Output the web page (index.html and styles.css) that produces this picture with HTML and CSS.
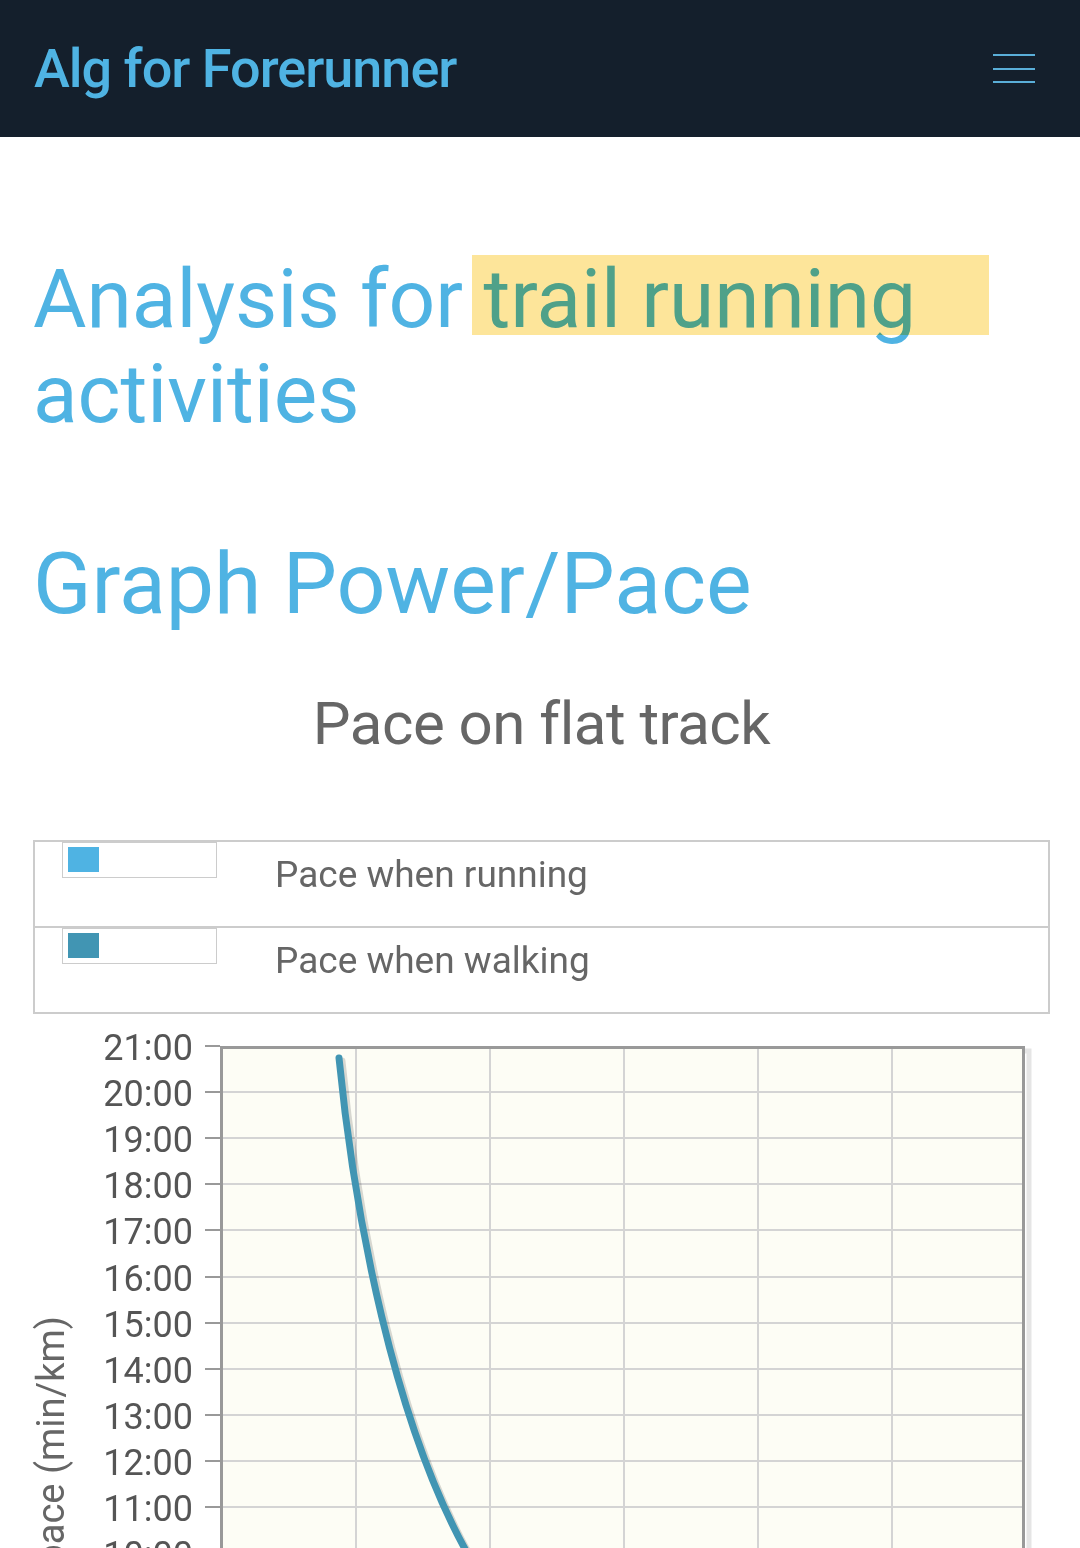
FILE: index.html
```html
<!DOCTYPE html>
<html lang="en">
  <head>
    <meta charset="UTF-8" />
    <meta name="viewport" content="width=device-width, initial-scale=1.0" />
    <title>Alg for Forerunner</title>
    <link rel="stylesheet" href="styles.css">
  </head>
  <body>
    <!-- Top bar -->
    <header class="navbar">
      <a class="brand" href="#">Alg for Forerunner</a>
      <button class="menu-toggle" aria-label="Menu">
        <span></span>
        <span></span>
        <span></span>
      </button>
    </header>

    <main class="content">
      <h1 class="page-title">Analysis for <mark class="marker">trail running</mark> activities</h1>

      <h2 class="section-title">Graph Power/Pace</h2>

      <div class="chart-title">Pace on flat track</div>

      <!-- Legend -->
      <div class="legend">
        <div class="legend-row">
          <span class="swatch"><span class="swatch-color running"></span></span>
          <span class="legend-label">Pace when running</span>
        </div>
        <div class="legend-row">
          <span class="swatch"><span class="swatch-color walking"></span></span>
          <span class="legend-label">Pace when walking</span>
        </div>
      </div>

      <!-- Chart -->
      <svg class="chart" width="1017" height="535" viewBox="0 0 1017 535">
        <!-- plot background + shadow -->
        <rect x="192" y="37" width="804" height="560" fill="none" stroke="rgba(0,0,0,0.1)" stroke-width="5" />
        <rect x="187" y="32" width="805" height="560" fill="#fdfdf5" />

        <!-- grid -->
        <g stroke="#d4d4d4" stroke-width="2">
          <line x1="323" y1="32" x2="323" y2="535" />
          <line x1="457" y1="32" x2="457" y2="535" />
          <line x1="591" y1="32" x2="591" y2="535" />
          <line x1="725" y1="32" x2="725" y2="535" />
          <line x1="859" y1="32" x2="859" y2="535" />
          <line x1="187" y1="78" x2="992" y2="78" />
          <line x1="187" y1="124" x2="992" y2="124" />
          <line x1="187" y1="170" x2="992" y2="170" />
          <line x1="187" y1="216" x2="992" y2="216" />
          <line x1="187" y1="263" x2="992" y2="263" />
          <line x1="187" y1="309" x2="992" y2="309" />
          <line x1="187" y1="355" x2="992" y2="355" />
          <line x1="187" y1="401" x2="992" y2="401" />
          <line x1="187" y1="447" x2="992" y2="447" />
          <line x1="187" y1="493" x2="992" y2="493" />
          <line x1="187" y1="539" x2="992" y2="539" />
        </g>

        <!-- ticks -->
        <g stroke="#999" stroke-width="2">
          <line x1="172" y1="32" x2="187" y2="32" />
          <line x1="172" y1="78" x2="187" y2="78" />
          <line x1="172" y1="124" x2="187" y2="124" />
          <line x1="172" y1="170" x2="187" y2="170" />
          <line x1="172" y1="216" x2="187" y2="216" />
          <line x1="172" y1="263" x2="187" y2="263" />
          <line x1="172" y1="309" x2="187" y2="309" />
          <line x1="172" y1="355" x2="187" y2="355" />
          <line x1="172" y1="401" x2="187" y2="401" />
          <line x1="172" y1="447" x2="187" y2="447" />
          <line x1="172" y1="493" x2="187" y2="493" />
          <line x1="172" y1="539" x2="187" y2="539" />
        </g>

        <!-- plot frame -->
        <path d="M188.5 600 V33.5 H990.5 V600" fill="none" stroke="#999" stroke-width="3" />

        <!-- y labels -->
        <g class="axis-label" text-anchor="end">
          <text x="160" y="46">21:00</text>
          <text x="160" y="92">20:00</text>
          <text x="160" y="138">19:00</text>
          <text x="160" y="184">18:00</text>
          <text x="160" y="230">17:00</text>
          <text x="160" y="277">16:00</text>
          <text x="160" y="323">15:00</text>
          <text x="160" y="369">14:00</text>
          <text x="160" y="415">13:00</text>
          <text x="160" y="461">12:00</text>
          <text x="160" y="507">11:00</text>
          <text x="160" y="553">10:00</text>
        </g>
        <text class="axis-title" transform="translate(31 302) rotate(-90)" text-anchor="end">pace (min/km)</text>

        <!-- series -->
        <path d="M309 47 C325 210 365 410 435 538 L450 562" fill="none" stroke="rgba(0,0,0,0.15)" stroke-width="7" stroke-linecap="round" />
        <path d="M306 44 C322 207 362 407 432 535 L447 559" fill="none" stroke="#4195b3" stroke-width="7" stroke-linecap="round" />
      </svg>
    </main>
  </body>
</html>
```

FILE: styles.css
```css
body {
  margin: 0;
  font-family: Roboto, "Noto Sans", sans-serif;
  background: #fff;
  overflow: hidden;
}

.navbar {
  display: flex;
  align-items: center;
  justify-content: space-between;
  height: 137px;
  padding: 0 45px 0 34px;
  background: #141f2c;
}

.brand {
  font-size: 54px;
  font-weight: 500;
  color: #4fb3e3;
  text-decoration: none;
  letter-spacing: -1px;
}

.menu-toggle {
  display: flex;
  flex-direction: column;
  justify-content: space-between;
  width: 42px;
  height: 29px;
  padding: 0;
  border: none;
  background: none;
}

.menu-toggle span {
  display: block;
  height: 2px;
  background: #5aaed8;
}

.content {
  padding: 0 30px 0 33px;
}

.page-title {
  margin: 115px 0 0;
  font-size: 82px;
  font-weight: 400;
  line-height: 95px;
  color: #4fb3e3;
}

.marker {
  position: relative;
  color: inherit;
  background: none;
}

.marker::after {
  content: "";
  position: absolute;
  left: -11px;
  right: -73px;
  top: 4px;
  bottom: 12px;
  background: #fde59a;
  mix-blend-mode: multiply;
}

.section-title {
  margin: 92px 0 0;
  font-size: 86px;
  font-weight: 400;
  line-height: 100px;
  color: #4fb3e3;
}

.chart-title {
  margin-top: 55px;
  font-size: 60px;
  line-height: 70px;
  text-align: center;
  color: #666;
  letter-spacing: -0.5px;
}

.legend {
  margin-top: 81px;
  border: 2px solid #ccc;
}

.legend-row {
  display: flex;
  align-items: flex-start;
  height: 84px;
}

.legend-row + .legend-row {
  border-top: 2px solid #ccc;
}

.swatch {
  display: block;
  width: 153px;
  height: 34px;
  margin-left: 27px;
  border: 1px solid #ccc;
}

.swatch-color {
  display: block;
  width: 31px;
  height: 25px;
  margin: 4px 0 0 5px;
}

.swatch-color.running {
  background: #4fb3e3;
}

.swatch-color.walking {
  background: #4195b3;
}

.legend-label {
  margin: 11px 0 0 58px;
  font-size: 37px;
  line-height: 44px;
  color: #666;
}

.chart {
  display: block;
  overflow: visible;
}

.axis-label {
  font-family: Roboto, "Noto Sans", sans-serif;
  font-size: 36px;
  fill: #555;
}

.axis-title {
  font-family: Roboto, "Noto Sans", sans-serif;
  font-size: 38px;
  fill: #666;
}
```
